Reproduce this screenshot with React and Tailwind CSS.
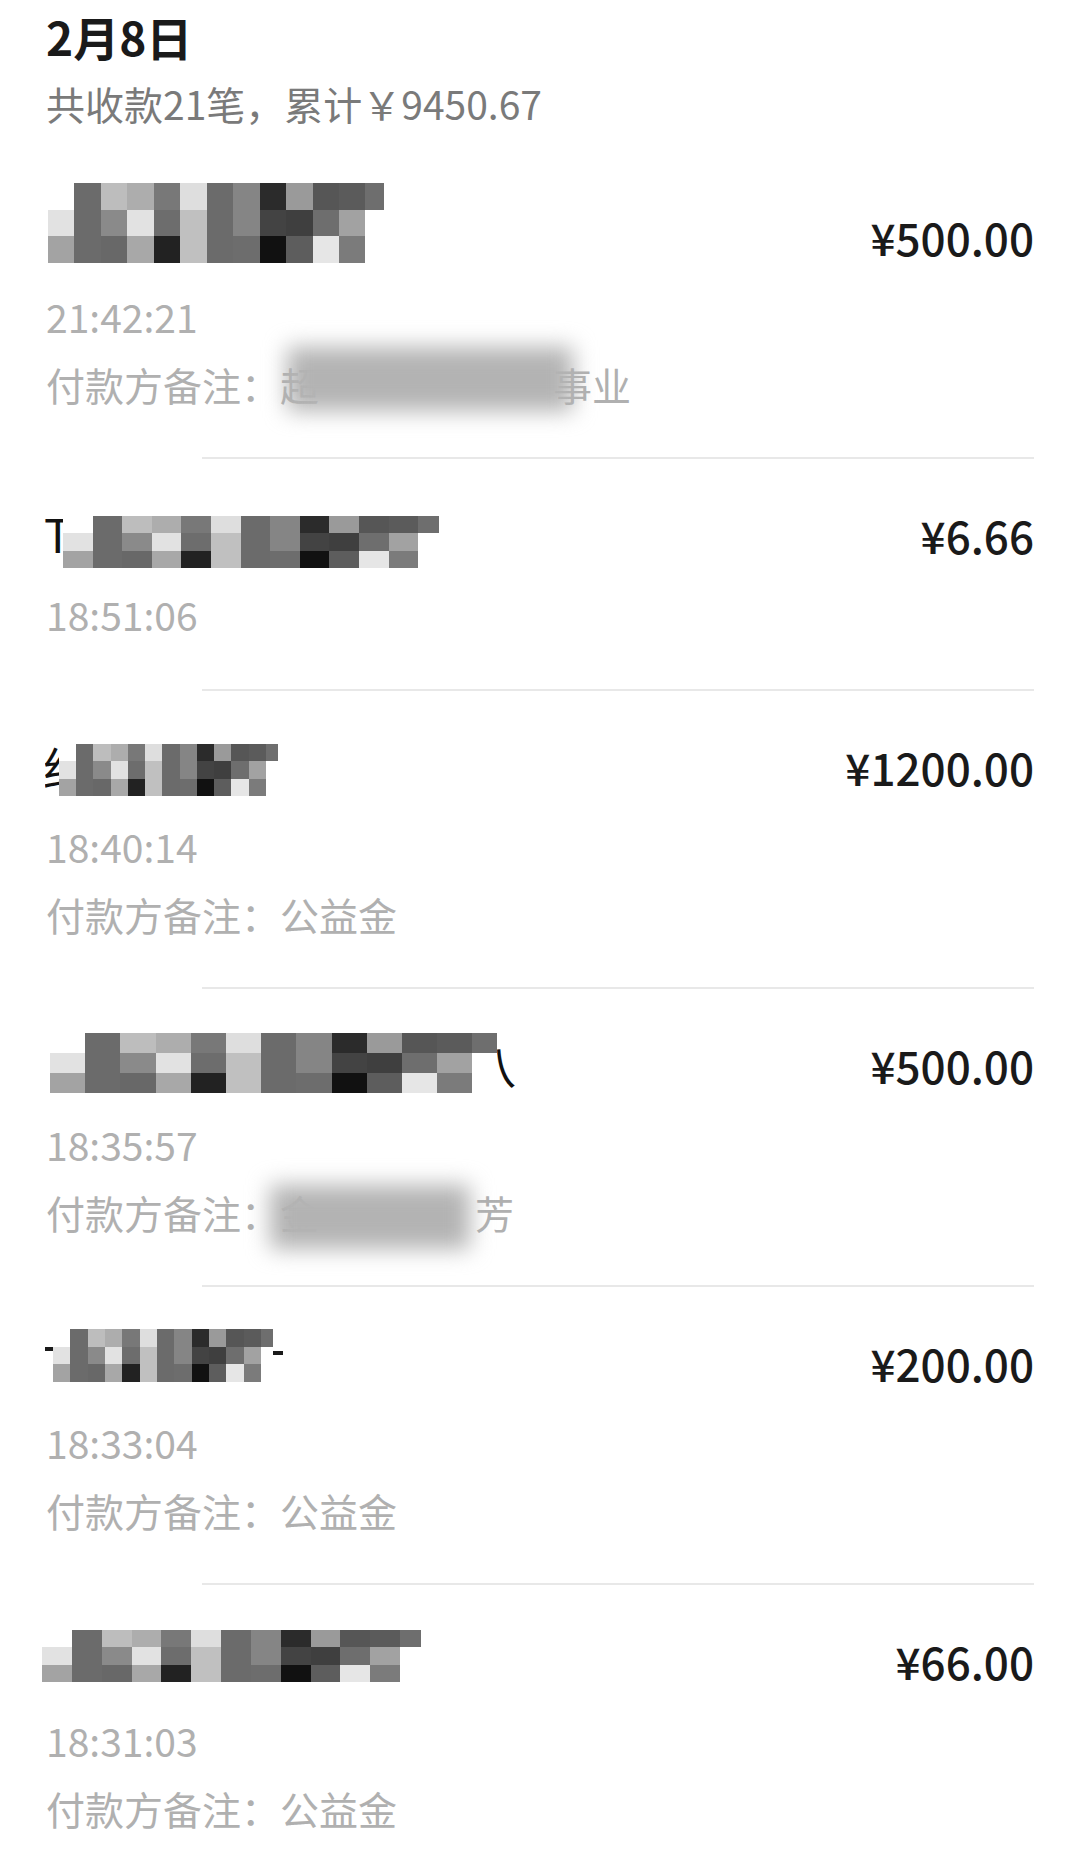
import React from "react";

// mosaic sticker used over payer names (same pattern, stretched per row)
const cells = [
  ["bg-white", "bg-[#6b6b6b]", "bg-[#bdbdbd]", "bg-[#adadad]", "bg-[#787878]", "bg-[#dedede]", "bg-[#6b6b6b]", "bg-[#858585]", "bg-[#2b2b2b]", "bg-[#9a9a9a]", "bg-[#565656]", "bg-[#5b5b5b]", "bg-[#6e6e6e]"],
  ["bg-[#e2e2e2]", "bg-[#6b6b6b]", "bg-[#8a8a8a]", "bg-[#e2e2e2]", "bg-[#6d6d6d]", "bg-[#c0c0c0]", "bg-[#6b6b6b]", "bg-[#858585]", "bg-[#434343]", "bg-[#3f3f3f]", "bg-[#6e6e6e]", "bg-[#a2a2a2]", "bg-white"],
  ["bg-[#a3a3a3]", "bg-[#6b6b6b]", "bg-[#686868]", "bg-[#a8a8a8]", "bg-[#222222]", "bg-[#c0c0c0]", "bg-[#6b6b6b]", "bg-[#6d6d6d]", "bg-[#111111]", "bg-[#5d5d5d]", "bg-[#e6e6e6]", "bg-[#7b7b7b]", "bg-white"],
];

const Mosaic = ({ className }) => (
  <div className={`relative z-10 shrink-0 grid grid-cols-[repeat(12,1fr)_0.7fr] grid-rows-3 ${className}`}>
    {cells.flat().map((c, i) => (
      <div key={i} className={c} />
    ))}
  </div>
);

const Blur = ({ className }) => (
  <span className={`absolute bg-[#b3b3b3] blur-[11px] ${className}`} />
);

const gap6 = "\u3000".repeat(6);
const gap4 = "\u3000".repeat(4);

const rows = [
  {
    amount: "¥500.00",
    time: "21:42:21",
    name: <Mosaic className="ml-[2px] mt-[-24px] w-[336px] h-[80px]" />,
    note: (
      <>
        付款方备注：超{gap6}事业
        <Blur className="left-[241px] top-[-12px] w-[286px] h-[64px]" />
      </>
    ),
  },
  {
    amount: "¥6.66",
    time: "18:51:06",
    name: (
      <>
        <span className="ml-[-2px] mt-[5px] w-[19px] overflow-hidden whitespace-nowrap text-[46px] leading-[46px] text-[#111]">T</span>
        <Mosaic className="mt-[11px] w-[376px] h-[52px]" />
      </>
    ),
  },
  {
    amount: "¥1200.00",
    time: "18:40:14",
    name: (
      <>
        <span className="ml-[-1px] mt-[6px] w-[14px] overflow-hidden whitespace-nowrap text-[46px] leading-[46px] text-[#111]">
          <span className="block ml-[-2px]">约</span>
        </span>
        <Mosaic className="mt-[7px] w-[219px] h-[52px]" />
      </>
    ),
    note: "付款方备注：公益金",
  },
  {
    amount: "¥500.00",
    time: "18:35:57",
    name: (
      <>
        <Mosaic className="ml-[4px] mt-[-2px] w-[447px] h-[60px]" />
        <span className="ml-[-27px] mt-[6px] whitespace-nowrap text-[46px] leading-[46px] text-[#111]">八</span>
      </>
    ),
    note: (
      <>
        付款方备注：金{gap4}芳
        <Blur className="left-[224px] top-[-2px] w-[200px] h-[64px]" />
      </>
    ),
  },
  {
    amount: "¥200.00",
    time: "18:33:04",
    name: (
      <>
        <span className="ml-[-1px] mt-[14px] w-[8px] h-[4px] bg-[#1a1a1a]" />
        <Mosaic className="mt-[-4px] w-[220px] h-[53px]" />
        <span className="mt-[18px] w-[10px] h-[4px] bg-[#1a1a1a]" />
      </>
    ),
    note: "付款方备注：公益金",
  },
  {
    amount: "¥66.00",
    time: "18:31:03",
    name: <Mosaic className="ml-[-4px] mt-[-1px] w-[379px] h-[52px]" />,
    note: "付款方备注：公益金",
  },
];

const Row = ({ row, last }) => (
  <div>
    <div className={row.note ? "pt-[46px] pb-[48px]" : "pt-[46px] pb-[50px]"}>
      <div className="flex justify-between items-start h-[60px]">
        <div className="flex items-start">{row.name}</div>
        <div className="text-[44px] leading-[60px] font-medium text-[#1a1a1a]">{row.amount}</div>
      </div>
      <div className="mt-[24px] text-[39px] leading-[50px] text-[#b0b0b0]">{row.time}</div>
      {row.note && (
        <div className="relative mt-[18px] text-[39px] leading-[50px] text-[#b0b0b0] whitespace-nowrap">
          {row.note}
        </div>
      )}
    </div>
    {!last && <div className="ml-[156px] h-[2px] bg-[#e8e8e8]" />}
  </div>
);

export default function App() {
  return (
    <div className="bg-white px-[46px] pt-[8px] font-['Noto_Sans_CJK_SC','Noto_Sans',sans-serif]">
      <div className="mb-[32px]">
        <div className="text-[46px] leading-[56px] font-bold text-[#1a1a1a]">2月8日</div>
        <div className="mt-[13px] text-[39px] leading-[52px] text-[#7a7a7a]">共收款21笔，累计￥9450.67</div>
      </div>
      {rows.map((r, i) => (
        <Row key={i} row={r} last={i === rows.length - 1} />
      ))}
    </div>
  );
}
